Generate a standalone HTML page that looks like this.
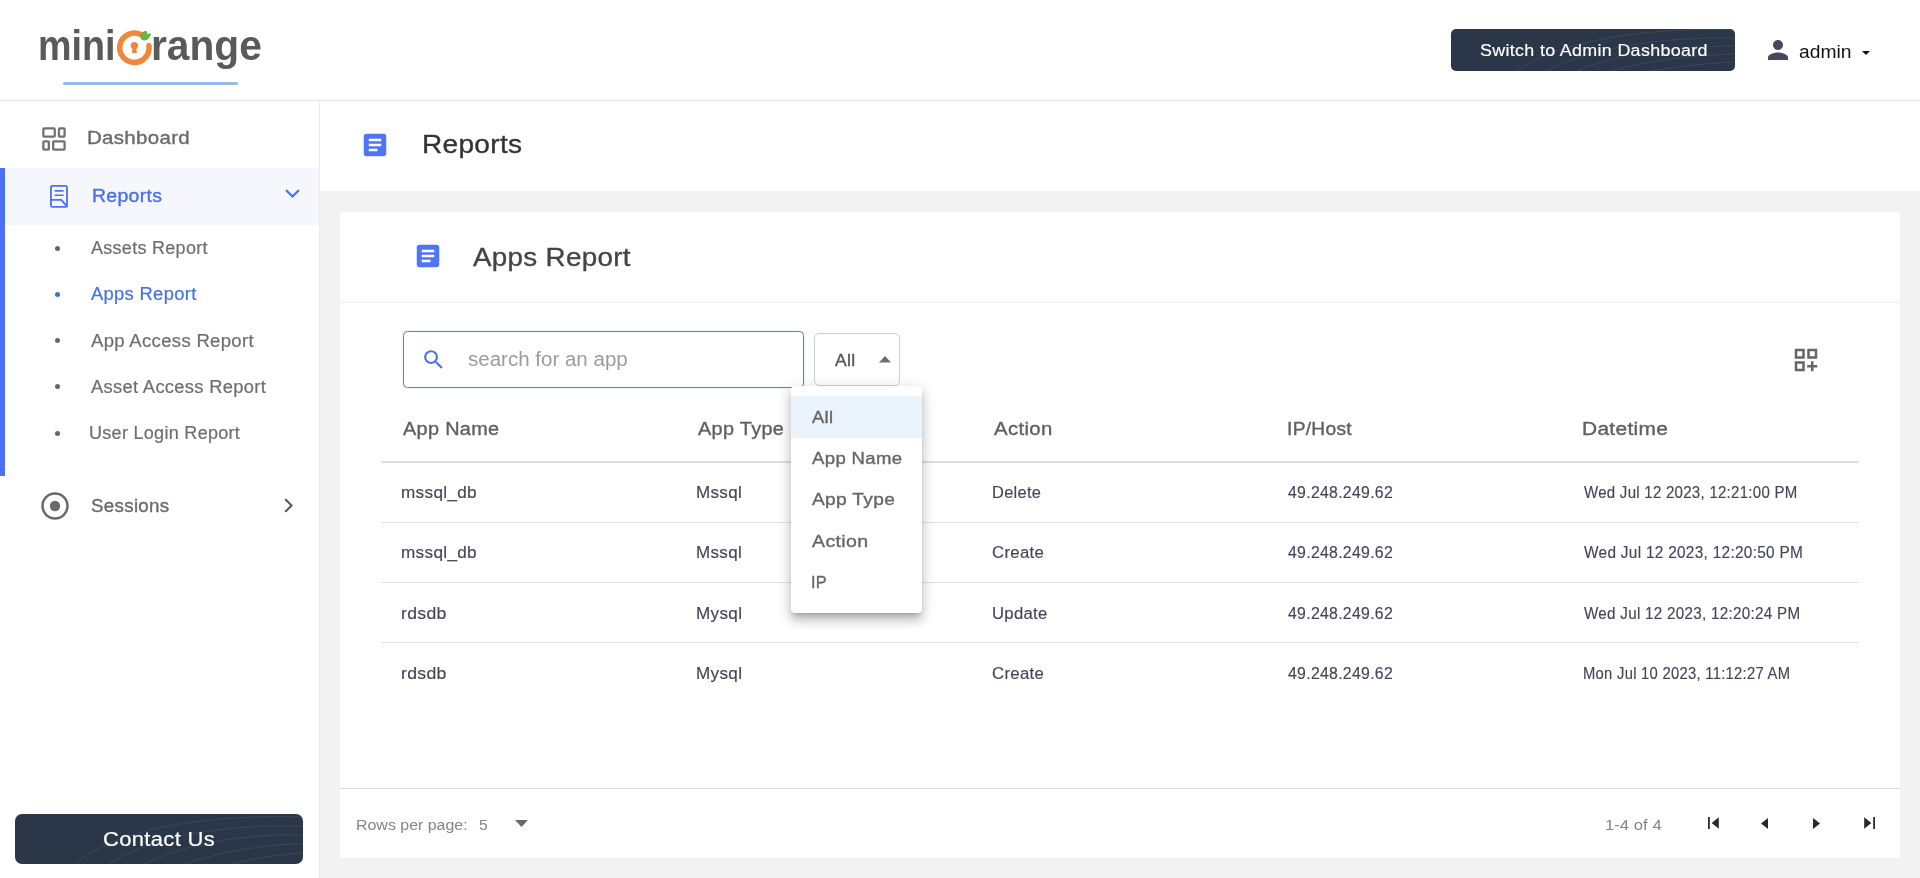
<!DOCTYPE html>
<html lang="en">
<head>
<meta charset="utf-8">
<title>Apps Report</title>
<style>
*{box-sizing:border-box;margin:0;padding:0}
html,body{width:1920px;height:878px;overflow:hidden;background:#f2f2f2;font-family:"Liberation Sans",sans-serif;color:#333}
.a{position:absolute}
.t{position:absolute;white-space:pre;line-height:1;transform-origin:0 50%;font-family:"Liberation Sans",sans-serif}
svg{position:absolute;overflow:visible}
#header{left:0;top:0;width:1920px;height:101px;background:#fff;border-bottom:1px solid #e2e3e4}
#sidebar{left:0;top:101px;width:320px;height:777px;background:#fff;border-right:1px solid #ececec}
#titlebar{left:320px;top:101px;width:1600px;height:90px;background:#fff}
#card{left:340px;top:212px;width:1560px;height:646px;background:#fff}
.hl{position:absolute;height:1px;background:#e2e2e2}
.btn{position:absolute;background:#2c3649;overflow:hidden}
</style>
</head>
<body>
<div id="header" class="a"></div>
<div id="sidebar" class="a"></div>
<div id="titlebar" class="a"></div>
<div id="card" class="a"></div>

<!-- logo -->
<svg style="left:112px;top:24px" width="48" height="48" viewBox="0 0 48 48">
  <path d="M28.6 10.4 A14.7 14.7 0 1 0 36.97 21.8" fill="none" stroke="#f0883a" stroke-width="5.6" stroke-linecap="round"/>
  <circle cx="22.4" cy="21.6" r="3.7" fill="#f0883a"/>
  <path d="M21 22.5 L23.8 22.5 L25 29.1 L19.8 29.1 Z" fill="#f0883a"/>
  <path d="M28.8 14.6 C27.6 10.5 30.5 7.6 34.2 6.6 C34.8 7.8 35.2 8.8 35.3 10 C36.6 9.4 37.8 9.3 39.2 9.6 C38.2 13.8 34.6 17.4 31.6 16.4 C30.4 16.2 29.4 15.6 28.8 14.6 Z" fill="#68b445"/>
</svg>
<div class="a" style="left:63px;top:82px;width:175px;height:3px;border-radius:2px;background:#90bdea"></div>

<!-- header button -->
<div class="btn" style="left:1451px;top:29px;width:284px;height:42px;border-radius:5px">
  <svg style="left:0;top:0" width="284" height="42" viewBox="0 0 284 42" fill="none" stroke="#4a5468" stroke-width="0.8" opacity="0.7">
    <path d="M66 42 C110 10 200 -2 284 1"/><path d="M96 42 C140 18 210 8 284 9"/><path d="M126 42 C165 25 220 17 284 17"/><path d="M160 42 C195 32 240 26 284 25"/><path d="M200 42 C230 37 260 34 284 33"/>
  </svg>
</div>
<!-- person icon -->
<svg style="left:1763px;top:35px" width="30" height="30" viewBox="0 0 24 24"><path fill="#4a4660" d="M12 12c2.21 0 4-1.79 4-4s-1.79-4-4-4-4 1.79-4 4 1.79 4 4 4zm0 2c-2.67 0-8 1.34-8 4v2h16v-2c0-2.66-5.33-4-8-4z"/></svg>
<svg style="left:1862px;top:51px" width="8" height="4" viewBox="0 0 8 4"><path d="M0 0H8L4 4Z" fill="#111"/></svg>

<!-- sidebar -->
<svg style="left:41px;top:126px" width="26" height="26" viewBox="0 0 26 26" fill="none" stroke="#717171" stroke-width="2.3" stroke-linejoin="round">
  <rect x="2.35" y="2.35" width="11.4" height="8.2" rx="0.9"/><rect x="17.95" y="2.35" width="5.65" height="8.2" rx="0.9"/>
  <rect x="2.35" y="15.35" width="5.5" height="8.2" rx="0.9"/><rect x="12.15" y="15.35" width="11.45" height="8.2" rx="0.9"/>
</svg>
<div class="a" style="left:0;top:168px;width:319px;height:57px;background:#f5f7fd"></div>
<div class="a" style="left:0;top:168px;width:5px;height:308px;background:#4d6ff5"></div>
<svg style="left:49px;top:184px" width="20" height="25" viewBox="0 0 20 25" fill="none" stroke="#4d6ff5" stroke-width="1.8" stroke-linejoin="round" stroke-linecap="round">
  <rect x="1.9" y="1.8" width="16.1" height="21.1" rx="1.6"/>
  <path d="M6.2 6.85H14.1M6.2 11.3H14.1" stroke-width="1.6"/>
  <path d="M1.9 15.8 H12.2 L17.9 22.2"/>
</svg>
<svg style="left:285px;top:189px" width="15" height="10" viewBox="0 0 15 10" fill="none" stroke="#4d6ff5" stroke-width="2.3" stroke-linecap="round" stroke-linejoin="round"><path d="M1.7 1.7 L7.5 7.5 L13.3 1.7"/></svg>
<div class="a" style="left:54.5px;top:245.5px;width:5px;height:5px;border-radius:50%;background:#666"></div>
<div class="a" style="left:54.5px;top:291.5px;width:5px;height:5px;border-radius:50%;background:#3f6fe0"></div>
<div class="a" style="left:54.5px;top:338px;width:5px;height:5px;border-radius:50%;background:#666"></div>
<div class="a" style="left:54.5px;top:384px;width:5px;height:5px;border-radius:50%;background:#666"></div>
<div class="a" style="left:54.5px;top:430.5px;width:5px;height:5px;border-radius:50%;background:#666"></div>
<svg style="left:41px;top:491.5px" width="28" height="28" viewBox="0 0 28 28"><circle cx="14" cy="14" r="12.5" fill="none" stroke="#6a6a6a" stroke-width="2.5"/><circle cx="14" cy="14" r="5.2" fill="#6a6a6a"/></svg>
<svg style="left:284px;top:498px" width="10" height="15" viewBox="0 0 10 15" fill="none" stroke="#5a5a5a" stroke-width="2.1" stroke-linecap="round" stroke-linejoin="round"><path d="M1.8 1.8 L7.6 7.5 L1.8 13.2"/></svg>
<div class="btn" style="left:15px;top:814px;width:288px;height:50px;border-radius:7px">
  <svg style="left:0;top:0" width="288" height="50" viewBox="0 0 288 50" fill="none" stroke="#4a5468" stroke-width="0.8" opacity="0.7">
    <path d="M60 50 C100 15 190 0 288 3"/><path d="M94 50 C135 22 210 10 288 12"/><path d="M130 50 C170 30 225 20 288 21"/><path d="M170 50 C205 38 250 30 288 30"/><path d="M215 50 C240 44 268 40 288 39"/>
  </svg>
</div>

<!-- title icons -->
<svg style="left:360px;top:130px" width="30" height="30" viewBox="0 0 24 24"><path fill="#4e74f8" d="M19 3H5c-1.1 0-2 .9-2 2v14c0 1.1.9 2 2 2h14c1.1 0 2-.9 2-2V5c0-1.1-.9-2-2-2zm-5 14H7v-2h7v2zm3-4H7v-2h10v2zm0-4H7V7h10v2z"/></svg>
<svg style="left:413px;top:241px" width="30" height="30" viewBox="0 0 24 24"><path fill="#4e74f8" d="M19 3H5c-1.1 0-2 .9-2 2v14c0 1.1.9 2 2 2h14c1.1 0 2-.9 2-2V5c0-1.1-.9-2-2-2zm-5 14H7v-2h7v2zm3-4H7v-2h10v2zm0-4H7V7h10v2z"/></svg>
<div class="hl" style="left:340px;top:302px;width:1560px;background:#f0f0f0"></div>

<!-- search -->
<div class="a" style="left:403px;top:331px;width:401px;height:57px;border:1px solid #6878b2;border-radius:4.5px;box-shadow:0 0 0 2px rgba(210,238,250,.28);background:#fff"></div>
<svg style="left:421px;top:347px" width="25.5" height="25.5" viewBox="0 0 24 24"><path fill="#4d72e8" d="M15.5 14h-.79l-.28-.27C15.41 12.59 16 11.11 16 9.500 16 5.910 13.090 3 9.500 3S3 5.910 3 9.500 5.910 16 9.500 16c1.610 0 3.090-.59 4.230-1.570l.27.28v.79l5 4.990L20.490 19l-4.990-5zm-6 0C7.010 14 5 11.990 5 9.500S7.010 5 9.500 5 14 7.010 14 9.500 11.990 14 9.500 14z"/></svg>
<div class="a" style="left:814px;top:333px;width:86px;height:53px;border:1px solid #cfcfcf;border-radius:5px;background:#fff"></div>
<svg style="left:879px;top:356.2px" width="12" height="6.5" viewBox="0 0 12 6.5"><path d="M0 6.5H12L6 0Z" fill="#6e6e6e"/></svg>
<!-- grid icon -->
<svg style="left:1790.6px;top:344.6px" width="30" height="30" viewBox="0 0 24 24"><path fill="#666" d="M3 11h8V3H3v8zm2-6h4v4H5V5zm8-2v8h8V3h-8zm6 6h-4V5h4v4zM3 21h8v-8H3v8zm2-6h4v4H5v-4zm13-2h-2v3h-3v2h3v3h2v-3h3v-2h-3z"/></svg>

<!-- table lines -->
<div class="hl" style="left:381px;top:461px;width:1478px;height:2px;background:#dedede"></div>
<div class="hl" style="left:381px;top:522px;width:1478px"></div>
<div class="hl" style="left:381px;top:582px;width:1478px"></div>
<div class="hl" style="left:381px;top:642px;width:1478px"></div>
<div class="hl" style="left:340px;top:788px;width:1560px;background:#dddddd"></div>

<!-- footer icons -->
<svg style="left:515px;top:820px" width="13" height="7" viewBox="0 0 13 7"><path d="M0 0H13L6.5 7Z" fill="#6a6a6a"/></svg>
<svg style="left:1708px;top:817px" width="11" height="12" viewBox="0 0 11 12" fill="#2a2a2a"><rect x="0" y="0" width="1.8" height="12"/><path d="M10.8 0.3V11.7L3.6 6Z"/></svg>
<svg style="left:1761px;top:817.5px" width="7" height="11" viewBox="0 0 7 11" fill="#2a2a2a"><path d="M7 0V11L0 5.5Z"/></svg>
<svg style="left:1812.5px;top:817.5px" width="7" height="11" viewBox="0 0 7 11" fill="#2a2a2a"><path d="M0 0V11L7 5.5Z"/></svg>
<svg style="left:1863.5px;top:817px" width="11" height="12" viewBox="0 0 11 12" fill="#2a2a2a"><rect x="9.2" y="0" width="1.8" height="12"/><path d="M0.2 0.3V11.7L7.4 6Z"/></svg>

<!-- dropdown -->
<div class="a" style="left:791px;top:386px;width:131px;height:227px;background:#fff;border-radius:4px;z-index:10;box-shadow:0 5px 5px -3px rgba(0,0,0,.2),0 8px 10px 1px rgba(0,0,0,.14),0 3px 14px 2px rgba(0,0,0,.12)">
  <div class="a" style="left:0;top:10px;width:131px;height:42px;background:#ebf3fd"></div>
</div>

<div id="tx" style="position:absolute;left:0;top:0;width:1920px;height:878px;will-change:transform;z-index:30">
<div class="t" style="left:1480.00px;top:43px;font-size:16px;color:#ffffff;letter-spacing:0.3px;-webkit-text-stroke:0.15px #ffffff;transform:scaleX(1.1163);">Switch to Admin Dashboard</div>
<div class="t" style="left:1799.00px;top:44px;font-size:17.5px;color:#111111;transform:scaleX(1.1002);">admin</div>
<div class="t" style="left:37.50px;top:24px;font-size:43px;color:#5a5a5a;font-weight:700;transform:scaleX(0.8773);">mini</div>
<div class="t" style="left:151.00px;top:24px;font-size:43px;color:#5a5a5a;font-weight:700;transform:scaleX(0.9469);">range</div>
<div class="t" style="left:87.00px;top:129px;font-size:18px;color:#6a6a6a;letter-spacing:0.3px;-webkit-text-stroke:0.35px #6a6a6a;transform:scaleX(1.1348);">Dashboard</div>
<div class="t" style="left:92.00px;top:187px;font-size:18px;color:#4a6cf0;letter-spacing:0.3px;-webkit-text-stroke:0.35px #4a6cf0;transform:scaleX(1.0796);">Reports</div>
<div class="t" style="left:90.50px;top:240px;font-size:17.5px;color:#6e6e6e;letter-spacing:0.3px;-webkit-text-stroke:0.2px #6e6e6e;transform:scaleX(1.0263);">Assets Report</div>
<div class="t" style="left:90.50px;top:286px;font-size:17.5px;color:#4272e4;letter-spacing:0.3px;-webkit-text-stroke:0.2px #4272e4;transform:scaleX(1.0495);">Apps Report</div>
<div class="t" style="left:90.50px;top:333px;font-size:17.5px;color:#6e6e6e;letter-spacing:0.3px;-webkit-text-stroke:0.2px #6e6e6e;transform:scaleX(1.0585);">App Access Report</div>
<div class="t" style="left:90.50px;top:379px;font-size:17.5px;color:#6e6e6e;letter-spacing:0.3px;-webkit-text-stroke:0.2px #6e6e6e;transform:scaleX(1.0479);">Asset Access Report</div>
<div class="t" style="left:89.00px;top:425px;font-size:17.5px;color:#6e6e6e;letter-spacing:0.3px;-webkit-text-stroke:0.2px #6e6e6e;transform:scaleX(1.0274);">User Login Report</div>
<div class="t" style="left:90.50px;top:497px;font-size:18px;color:#6a6a6a;letter-spacing:0.3px;-webkit-text-stroke:0.35px #6a6a6a;transform:scaleX(1.0405);">Sessions</div>
<div class="t" style="left:102.75px;top:829px;font-size:20px;color:#ffffff;letter-spacing:0.3px;-webkit-text-stroke:0.2px #ffffff;transform:scaleX(1.0991);">Contact Us</div>
<div class="t" style="left:421.50px;top:131px;font-size:26px;color:#333333;letter-spacing:0.3px;-webkit-text-stroke:0.35px #333333;transform:scaleX(1.0770);">Reports</div>
<div class="t" style="left:473.00px;top:244px;font-size:26px;color:#444444;letter-spacing:0.3px;-webkit-text-stroke:0.35px #444444;transform:scaleX(1.0676);">Apps Report</div>
<div class="t" style="left:468.00px;top:349px;font-size:20px;color:#9c9c9c;transform:scaleX(1.0260);">search for an app</div>
<div class="t" style="left:835.00px;top:352px;font-size:17px;color:#555555;letter-spacing:0.3px;-webkit-text-stroke:0.35px #555555;transform:scaleX(1.0326);">All</div>
<div class="t" style="left:402.50px;top:420px;font-size:18px;color:#606060;letter-spacing:0.3px;-webkit-text-stroke:0.35px #606060;transform:scaleX(1.1034);">App Name</div>
<div class="t" style="left:698.00px;top:420px;font-size:18px;color:#606060;letter-spacing:0.3px;-webkit-text-stroke:0.35px #606060;transform:scaleX(1.1040);">App Type</div>
<div class="t" style="left:993.50px;top:420px;font-size:18px;color:#606060;letter-spacing:0.3px;-webkit-text-stroke:0.35px #606060;transform:scaleX(1.1295);">Action</div>
<div class="t" style="left:1287.00px;top:420px;font-size:18px;color:#606060;letter-spacing:0.3px;-webkit-text-stroke:0.35px #606060;transform:scaleX(1.0634);">IP/Host</div>
<div class="t" style="left:1582.00px;top:420px;font-size:18px;color:#606060;letter-spacing:0.3px;-webkit-text-stroke:0.35px #606060;transform:scaleX(1.1590);">Datetime</div>
<div class="t" style="left:400.50px;top:485px;font-size:16px;color:#45455a;letter-spacing:0.3px;-webkit-text-stroke:0.15px #45455a;transform:scaleX(1.0715);">mssql_db</div>
<div class="t" style="left:696.00px;top:485px;font-size:16px;color:#45455a;letter-spacing:0.3px;-webkit-text-stroke:0.15px #45455a;transform:scaleX(1.0636);">Mssql</div>
<div class="t" style="left:991.50px;top:485px;font-size:16px;color:#45455a;letter-spacing:0.3px;-webkit-text-stroke:0.15px #45455a;transform:scaleX(1.0262);">Delete</div>
<div class="t" style="left:1288.00px;top:485px;font-size:16px;color:#45455a;letter-spacing:0.3px;-webkit-text-stroke:0.15px #45455a;transform:scaleX(0.9886);">49.248.249.62</div>
<div class="t" style="left:1584.00px;top:485px;font-size:16px;color:#45455a;letter-spacing:0.3px;-webkit-text-stroke:0.15px #45455a;transform:scaleX(0.9372);">Wed Jul 12 2023, 12:21:00 PM</div>
<div class="t" style="left:400.50px;top:545px;font-size:16px;color:#45455a;letter-spacing:0.3px;-webkit-text-stroke:0.15px #45455a;transform:scaleX(1.0715);">mssql_db</div>
<div class="t" style="left:696.00px;top:545px;font-size:16px;color:#45455a;letter-spacing:0.3px;-webkit-text-stroke:0.15px #45455a;transform:scaleX(1.0636);">Mssql</div>
<div class="t" style="left:991.50px;top:545px;font-size:16px;color:#45455a;letter-spacing:0.3px;-webkit-text-stroke:0.15px #45455a;transform:scaleX(1.0460);">Create</div>
<div class="t" style="left:1288.00px;top:545px;font-size:16px;color:#45455a;letter-spacing:0.3px;-webkit-text-stroke:0.15px #45455a;transform:scaleX(0.9886);">49.248.249.62</div>
<div class="t" style="left:1584.00px;top:545px;font-size:16px;color:#45455a;letter-spacing:0.3px;-webkit-text-stroke:0.15px #45455a;transform:scaleX(0.9620);">Wed Jul 12 2023, 12:20:50 PM</div>
<div class="t" style="left:400.50px;top:606px;font-size:16px;color:#45455a;letter-spacing:0.3px;-webkit-text-stroke:0.15px #45455a;transform:scaleX(1.1003);">rdsdb</div>
<div class="t" style="left:696.00px;top:606px;font-size:16px;color:#45455a;letter-spacing:0.3px;-webkit-text-stroke:0.15px #45455a;transform:scaleX(1.0685);">Mysql</div>
<div class="t" style="left:991.50px;top:606px;font-size:16px;color:#45455a;letter-spacing:0.3px;-webkit-text-stroke:0.15px #45455a;transform:scaleX(1.0424);">Update</div>
<div class="t" style="left:1288.00px;top:606px;font-size:16px;color:#45455a;letter-spacing:0.3px;-webkit-text-stroke:0.15px #45455a;transform:scaleX(0.9886);">49.248.249.62</div>
<div class="t" style="left:1584.00px;top:606px;font-size:16px;color:#45455a;letter-spacing:0.3px;-webkit-text-stroke:0.15px #45455a;transform:scaleX(0.9496);">Wed Jul 12 2023, 12:20:24 PM</div>
<div class="t" style="left:400.50px;top:666px;font-size:16px;color:#45455a;letter-spacing:0.3px;-webkit-text-stroke:0.15px #45455a;transform:scaleX(1.1003);">rdsdb</div>
<div class="t" style="left:696.00px;top:666px;font-size:16px;color:#45455a;letter-spacing:0.3px;-webkit-text-stroke:0.15px #45455a;transform:scaleX(1.0685);">Mysql</div>
<div class="t" style="left:991.50px;top:666px;font-size:16px;color:#45455a;letter-spacing:0.3px;-webkit-text-stroke:0.15px #45455a;transform:scaleX(1.0460);">Create</div>
<div class="t" style="left:1288.00px;top:666px;font-size:16px;color:#45455a;letter-spacing:0.3px;-webkit-text-stroke:0.15px #45455a;transform:scaleX(0.9886);">49.248.249.62</div>
<div class="t" style="left:1583.00px;top:666px;font-size:16px;color:#45455a;letter-spacing:0.3px;-webkit-text-stroke:0.15px #45455a;transform:scaleX(0.9243);">Mon Jul 10 2023, 11:12:27 AM</div>
<div class="t" style="left:355.50px;top:817px;font-size:15.5px;color:#848484;transform:scaleX(1.0283);">Rows per page:</div>
<div class="t" style="left:479.00px;top:817px;font-size:15.5px;color:#848484;transform:scaleX(1.0089);">5</div>
<div class="t" style="left:1604.50px;top:817px;font-size:15.5px;color:#848484;transform:scaleX(1.0784);">1-4 of 4</div>
<div class="t" style="left:812.00px;top:409px;font-size:16.5px;color:#666666;letter-spacing:0.3px;-webkit-text-stroke:0.35px #666666;transform:scaleX(1.1111);z-index:20;">All</div>
<div class="t" style="left:812.00px;top:450px;font-size:16.5px;color:#666666;letter-spacing:0.3px;-webkit-text-stroke:0.35px #666666;transform:scaleX(1.1250);z-index:20;">App Name</div>
<div class="t" style="left:812.00px;top:491px;font-size:16.5px;color:#666666;letter-spacing:0.3px;-webkit-text-stroke:0.35px #666666;transform:scaleX(1.1578);z-index:20;">App Type</div>
<div class="t" style="left:812.00px;top:533px;font-size:16.5px;color:#666666;letter-spacing:0.3px;-webkit-text-stroke:0.35px #666666;transform:scaleX(1.1831);z-index:20;">Action</div>
<div class="t" style="left:811.00px;top:574px;font-size:16.5px;color:#666666;letter-spacing:0.3px;-webkit-text-stroke:0.35px #666666;transform:scaleX(0.9878);z-index:20;">IP</div>
</div>
</body>
</html>
